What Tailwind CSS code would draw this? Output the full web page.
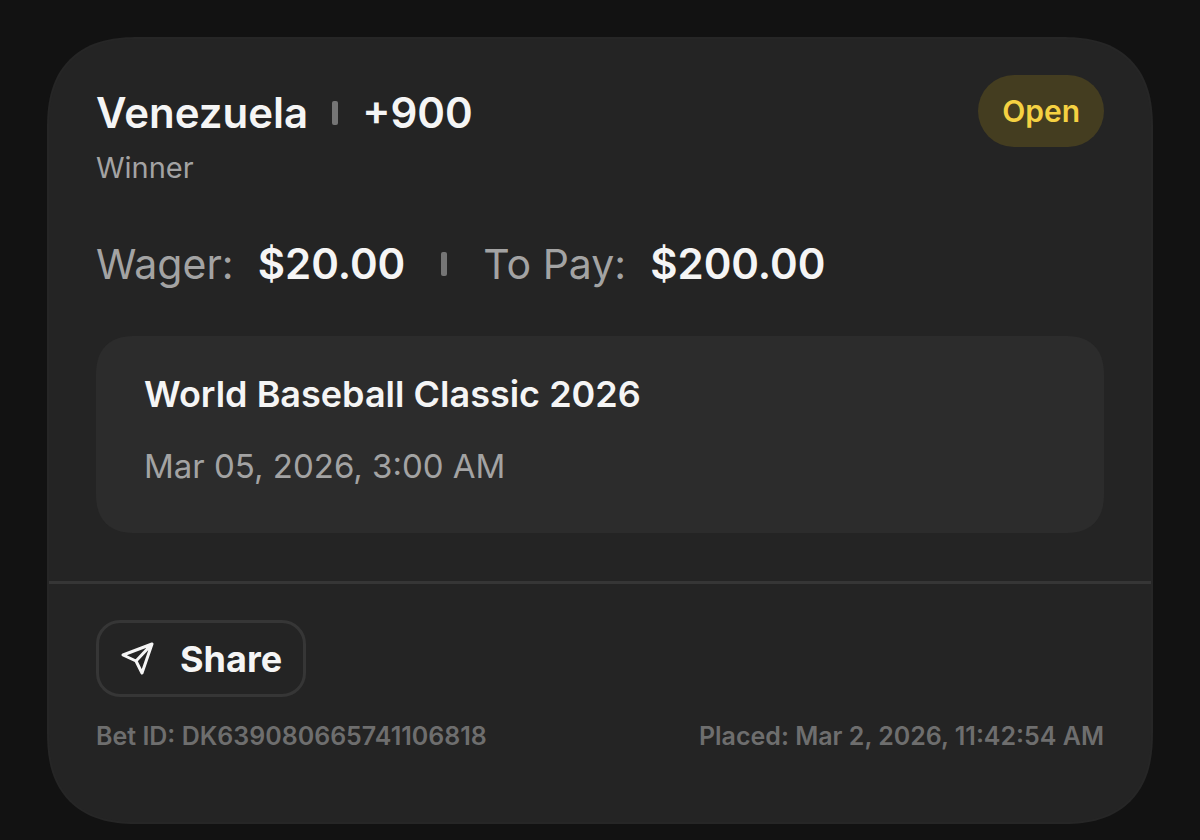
<!DOCTYPE html>
<html lang="en">
    <head>
        <meta charset="UTF-8" />
        <meta name="viewport" content="width=device-width, initial-scale=1.0" />
        <title>Bet Slip</title>
        <script src="https://cdn.jsdelivr.net/npm/@tailwindcss/browser@4"></script>
    </head>
    <body class="min-h-screen bg-[#121212] px-[47px] pt-[37px] pb-3 font-['Inter',sans-serif] text-[#f5f5f5]">
        <main class="rounded-[92px] border-2 border-[#262626] bg-[#242424] pt-9 pb-[71px] [corner-shape:superellipse(1.3)]">
            <section class="px-[47px] pb-12">
                <div class="flex items-start justify-between">
                    <div>
                        <h1 class="flex items-center pt-[13px] text-[42px] leading-[50px] font-semibold">
                            Venezuela
                            <span class="mx-6 h-6 w-[6px] rounded-xs bg-[#757575]"></span>
                            +900
                        </h1>
                        <p class="mt-3 text-[29px] leading-9 text-[#a3a3a3]">Winner</p>
                    </div>
                    <span class="rounded-full bg-[#443d20] px-6 text-[30px] leading-[72px] font-semibold text-[#f5d142]">Open</span>
                </div>

                <div class="mt-[53px] flex items-center text-[42px] leading-[50px]">
                    <span class="text-[41px] text-[#a3a3a3]">Wager:</span>
                    <span class="ml-6 font-semibold">$20.00</span>
                    <span class="mx-9 h-6 w-[6px] rounded-xs bg-[#757575]"></span>
                    <span class="text-[41px] text-[#a3a3a3]">To Pay:</span>
                    <span class="ml-6 font-semibold">$200.00</span>
                </div>

                <div class="mt-[47px] rounded-[40px] bg-[#2c2c2c] px-12 pt-9 pb-[46px] [corner-shape:superellipse(1.3)]">
                    <h2 class="text-[36px] leading-[44px] font-semibold">World Baseball Classic 2026</h2>
                    <p class="mt-[29px] text-[33px] leading-[42px] text-[#a3a3a3]">Mar 05, 2026, 3:00 AM</p>
                </div>
            </section>

            <footer class="border-t-[3px] border-[#363636] px-[47px] pt-9">
                <button type="button" class="flex h-[77px] items-center gap-6 rounded-3xl border-[3px] border-[#363636] px-[21px] text-[36px] font-bold">
                    <svg class="size-9" viewBox="0 0 36 36" fill="none" stroke="currentColor" stroke-width="3" stroke-linejoin="round" stroke-linecap="round" aria-hidden="true">
                        <path d="M32 3 3 14l13 6 6 12zM32 3 16 20" />
                    </svg>
                    Share
                </button>
                <div class="mt-6 flex justify-between text-[25px] leading-[30px] font-semibold text-[#6e6e6e]">
                    <span>Bet ID: DK639080665741106818</span>
                    <span>Placed: Mar 2, 2026, 11:42:54 AM</span>
                </div>
            </footer>
        </main>
    </body>
</html>
